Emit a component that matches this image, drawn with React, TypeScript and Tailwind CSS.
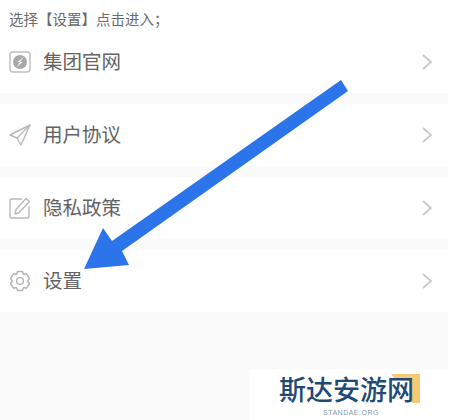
const CJK = { fontFamily: '"Noto Sans CJK SC", sans-serif' };

function Chevron() {
  return (
    <svg width="12" height="18" viewBox="0 0 12 18" fill="none" stroke="#c8c8c8" strokeWidth="1.8" className="mr-[15px] shrink-0">
      <path d="M2 2 L10 9 L2 16" />
    </svg>
  );
}

function Globe() {
  return (
    <svg width="22" height="22" viewBox="0 0 22 22" fill="none" className="shrink-0">
      <rect x="1" y="1" width="20" height="20" rx="3" stroke="#c0c0c0" strokeWidth="1.5" />
      <circle cx="11" cy="11" r="7" fill="#a8a8a8" />
      <path d="M15 5.5 L8.5 11 L11 11 L7.5 16.5 L13.5 11 L11 11 Z" fill="#f6f6f6" />
    </svg>
  );
}

function Send() {
  return (
    <svg width="22" height="22" viewBox="0 0 22 22" fill="none" stroke="#b8b8b8" strokeWidth="1.4" strokeLinejoin="round" className="shrink-0">
      <path d="M21 1 L1 11 L8 14 L12 21 Z" />
      <path d="M21 1 L8 14" />
    </svg>
  );
}

function Edit() {
  return (
    <svg width="22" height="22" viewBox="0 0 22 22" fill="none" stroke="#b8b8b8" strokeWidth="1.4" strokeLinejoin="round" className="shrink-0">
      <path d="M13 2 H2.5 A1.5 1.5 0 0 0 1 3.5 V19.5 A1.5 1.5 0 0 0 2.5 21 H18.5 A1.5 1.5 0 0 0 20 19.5 V9" />
      <path d="M17 1.5 L20.5 4.5 L10 15.5 L6 17 L7 12.5 Z" />
    </svg>
  );
}

function Gear() {
  return (
    <svg width="22" height="22" viewBox="0 0 22 22" fill="none" stroke="#b4b4b4" strokeWidth="1.4" strokeLinejoin="round" className="shrink-0">
      <path d="M8.5 1.5 H13.5 L14.5 4.5 L17.5 3.8 L20.5 8.5 L18.5 11 L20.5 13.5 L17.5 18.2 L14.5 17.5 L13.5 20.5 H8.5 L7.5 17.5 L4.5 18.2 L1.5 13.5 L3.5 11 L1.5 8.5 L4.5 3.8 L7.5 4.5 Z" />
      <circle cx="11" cy="11" r="3.4" />
    </svg>
  );
}

function Row({ icon, label }: { icon: React.ReactNode; label: string }) {
  return (
    <div className="flex h-[62px] items-center bg-white pl-[9px]">
      {icon}
      <span className="ml-[12px] -mt-[2px] flex-1 text-[19.5px] leading-none text-[#636363]" style={CJK}>
        {label}
      </span>
      <Chevron />
    </div>
  );
}

function Band() {
  return <div className="h-[11px] bg-[#fafafa]" />;
}

export default function App() {
  return (
    <div className="relative flex h-[420px] w-[450px] flex-col overflow-hidden bg-white pr-[2px]" style={CJK}>
      <div className="flex h-[31px] items-center pl-[9px] pt-[8px] text-[14.5px] leading-none text-[#6a6a6a]">
        选择【设置】点击进入；
      </div>
      <Row icon={<Globe />} label="集团官网" />
      <Band />
      <Row icon={<Send />} label="用户协议" />
      <Band />
      <Row icon={<Edit />} label="隐私政策" />
      <Band />
      <Row icon={<Gear />} label="设置" />
      <div className="flex-1 bg-[#fafafa]" />

      <svg width="450" height="420" viewBox="0 0 450 420" className="absolute left-0 top-0">
        <polygon
          points="341,80 348,91 122,251 129,265 84,269 103,228 112,241"
          fill="#2b74ea"
        />
      </svg>

      <div className="absolute bottom-0 right-[2px] flex h-[51px] w-[198px] flex-col bg-white pl-[29px] pt-[5px]">
        <div className="relative h-[30px] w-[141px]">
          <svg width="30" height="30" viewBox="0 0 30 30" className="absolute right-0 top-0">
            <path d="M1 0 H30 V29 H22 V7 L6 6 Z" fill="#f7c976" />
          </svg>
          <span
            className="absolute left-0 top-0 whitespace-nowrap text-[27px] font-medium leading-[30px] text-[#1d4a78]"
            style={{ fontFamily: '"Noto Sans CJK SC", serif' }}
          >
            斯达安游网
          </span>
        </div>
        <div
          className="ml-[44px] mt-[5px] text-[7px] leading-none tracking-[0.5px] text-[#8a98a8]"
          style={{ fontFamily: '"Liberation Sans", sans-serif' }}
        >
          STANDAE.ORG
        </div>
      </div>
    </div>
  );
}
